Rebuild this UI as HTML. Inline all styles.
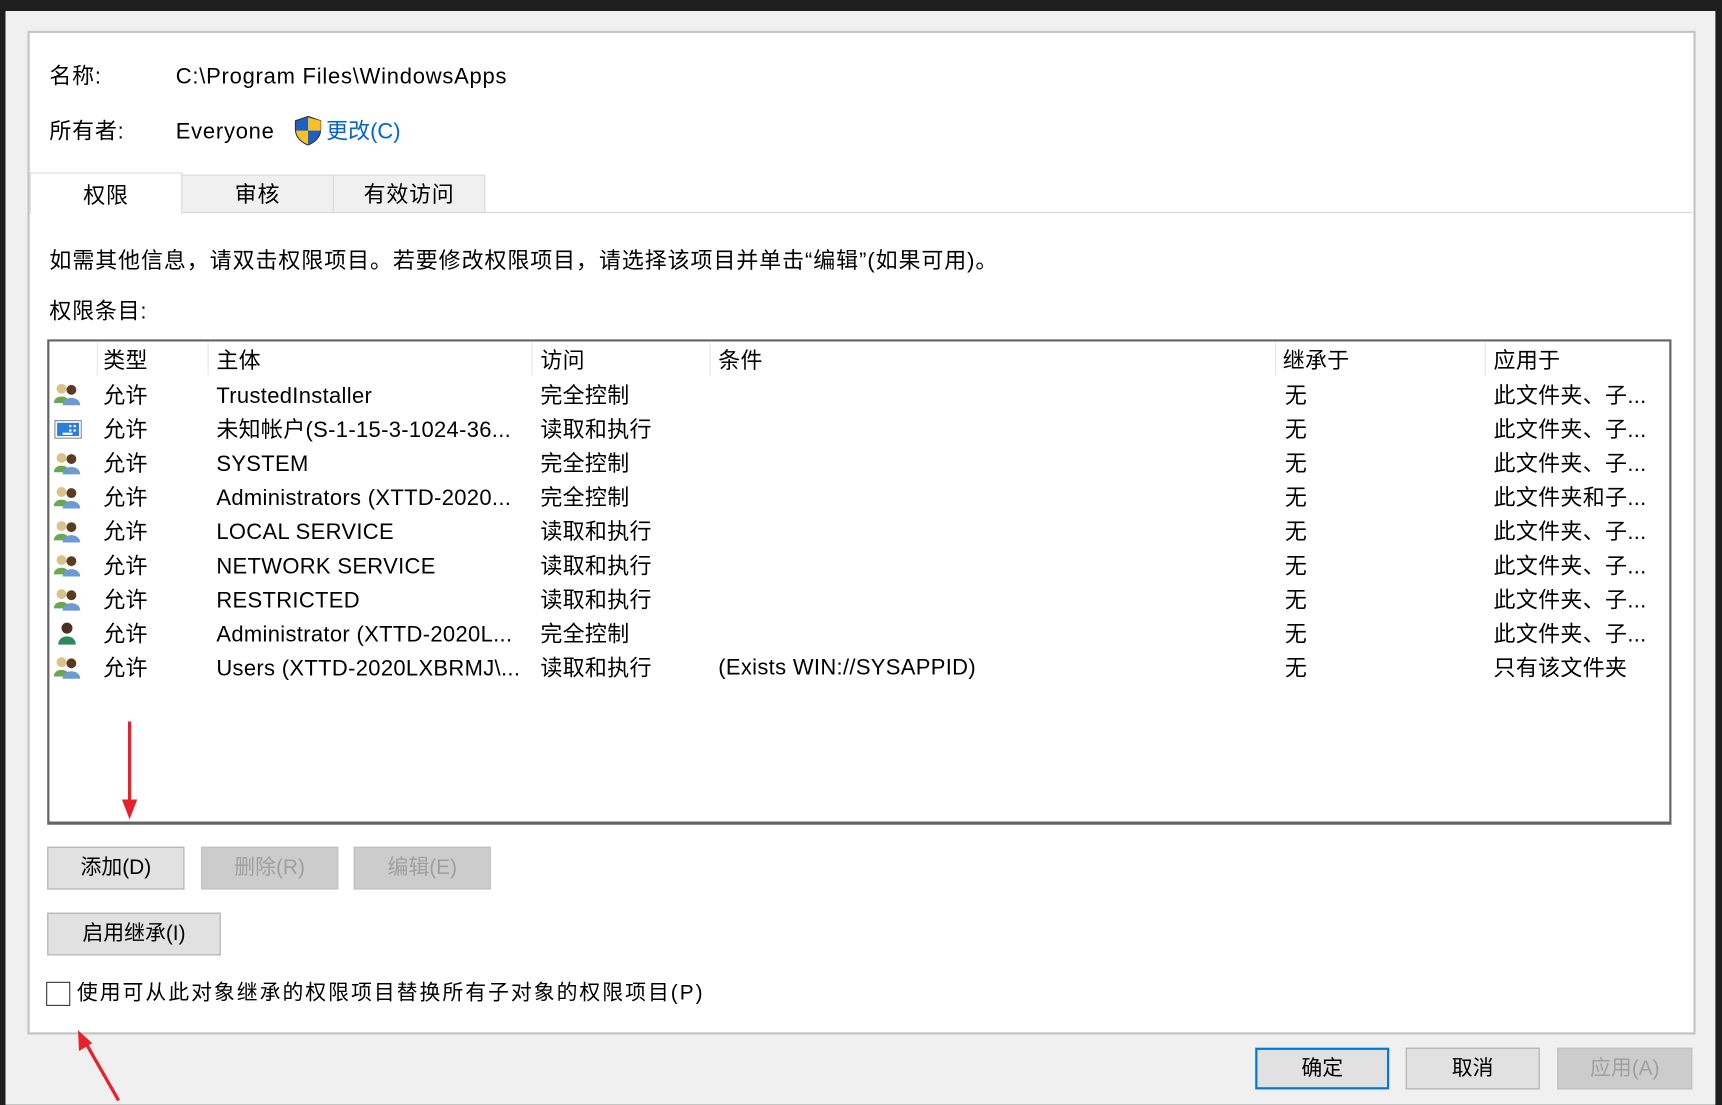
<!DOCTYPE html>
<html><head><meta charset="utf-8"><style>
html,body{margin:0;padding:0;width:1722px;height:1105px;overflow:hidden;background:#1e1e1e;}
#w{position:absolute;left:0;top:0;width:1568px;height:1006px;transform:scale(1.0982);transform-origin:0 0;font-family:"Liberation Sans","Noto Sans CJK SC",sans-serif;font-size:20px;color:#000;letter-spacing:0.7px;}
.a{position:absolute;white-space:nowrap;line-height:24px;}
.t{letter-spacing:0.3px;}
.btn{position:absolute;background:#e1e1e1;border:1px solid #adadad;box-sizing:border-box;text-align:center;font-size:19px;line-height:38px;letter-spacing:0;}
.dis{background:#cccccc;border-color:#bfbfbf;color:#a0a0a0;}
.tab{position:absolute;top:159px;height:35px;background:#f0f0f0;border:1px solid #d9d9d9;box-sizing:border-box;text-align:center;line-height:36px;}
</style></head><body><div id="w">
<div class="a" style="left:5px;top:10px;width:1557px;height:996px;background:#f0f0f0;"></div>
<div class="a" style="left:25px;top:28px;width:1515px;height:910px;background:#fff;border:2px solid #c4c4c4;"></div>
<div class="a" style="left:45px;top:58px;">名称:</div>
<div class="a" style="left:160px;top:58px;">C:\Program Files\WindowsApps</div>
<div class="a" style="left:45px;top:108px;">所有者:</div>
<div class="a" style="left:160px;top:108px;">Everyone</div>
<svg class="a" style="left:268px;top:105px" width="25" height="28" viewBox="0 0 25 28"><path d="M12.5 1 L24 5 V13 C24 20 18 25 12.5 27 C7 25 1 20 1 13 V5 Z" fill="#1f5fbf" stroke="#333" stroke-width="1"/><path d="M12.5 2 V14 H24 V5 Z" fill="#f5c22b"/><path d="M12.5 14 H1.5 C2 20 7 24.5 12.5 26.5 Z" fill="#f5c22b"/></svg>
<div class="a" style="left:297px;top:108px;color:#0066cc;letter-spacing:0;">更改(C)</div>
<div class="a" style="left:441px;top:193px;width:1100px;height:1px;background:#d9d9d9;"></div>
<div class="tab" style="left:165px;width:139px;">审核</div>
<div class="tab" style="left:303px;width:139px;">有效访问</div>
<div class="tab" style="left:27px;top:157px;width:139px;height:38px;background:#fff;border-bottom:none;line-height:42px;">权限</div>
<div class="a" style="left:45px;top:226px;letter-spacing:0.85px;">如需其他信息，请双击权限项目。若要修改权限项目，请选择该项目并单击“编辑”(如果可用)。</div>
<div class="a" style="left:45px;top:272px;">权限条目:</div>
<div class="a" style="left:43px;top:309px;width:1475px;height:437px;border:2px solid #646464;border-bottom-width:3px;background:#fff;"></div>
<div class="a" style="left:88px;top:312px;width:1px;height:30px;background:#e5e5e5"></div>
<div class="a" style="left:189px;top:312px;width:1px;height:30px;background:#e5e5e5"></div>
<div class="a" style="left:484px;top:312px;width:1px;height:30px;background:#e5e5e5"></div>
<div class="a" style="left:646px;top:312px;width:1px;height:30px;background:#e5e5e5"></div>
<div class="a" style="left:1161px;top:312px;width:1px;height:30px;background:#e5e5e5"></div>
<div class="a" style="left:1352px;top:312px;width:1px;height:30px;background:#e5e5e5"></div>
<div class="a t" style="left:94px;top:317px;">类型</div><div class="a t" style="left:197px;top:317px;">主体</div><div class="a t" style="left:492px;top:317px;">访问</div><div class="a t" style="left:654px;top:317px;">条件</div><div class="a t" style="left:1168px;top:317px;">继承于</div><div class="a t" style="left:1360px;top:317px;">应用于</div>
<svg width="0" height="0" style="position:absolute"><defs>
<g id="grp"><circle cx="7" cy="6" r="4.5" fill="#d9c38a"/><path d="M0 19 C0 11 14 11 14 19 Z" fill="#6aa84f"/><circle cx="16" cy="7" r="4.5" fill="#5a3a22"/><path d="M8 21 C8 12 24 12 24 21 Z" fill="#6b9bd1"/></g>
<g id="one"><circle cx="11" cy="6" r="5" fill="#4a3020"/><path d="M3 21 C3 11 19 11 19 21 Z" fill="#2e8b57"/></g>
<g id="app"><rect x="1" y="3" width="24" height="16" fill="#fff" stroke="#8a8a8a"/><rect x="3" y="5" width="20" height="12" fill="#2b7fd9"/><rect x="14" y="7" width="2" height="2" fill="#fff"/><rect x="18" y="7" width="2" height="2" fill="#fff"/><rect x="14" y="11" width="2" height="2" fill="#fff"/><rect x="18" y="11" width="2" height="2" fill="#fff"/><rect x="8" y="14" width="9" height="2" fill="#fff"/></g>
</defs></svg>
<svg class="a" style="left:49px;top:348px" width="26" height="22"><use href="#grp"/></svg>
<svg class="a" style="left:49px;top:380px" width="26" height="22"><use href="#app"/></svg>
<svg class="a" style="left:49px;top:411px" width="26" height="22"><use href="#grp"/></svg>
<svg class="a" style="left:49px;top:442px" width="26" height="22"><use href="#grp"/></svg>
<svg class="a" style="left:49px;top:473px" width="26" height="22"><use href="#grp"/></svg>
<svg class="a" style="left:49px;top:504px" width="26" height="22"><use href="#grp"/></svg>
<svg class="a" style="left:49px;top:535px" width="26" height="22"><use href="#grp"/></svg>
<svg class="a" style="left:50px;top:566px" width="24" height="22"><use href="#one"/></svg>
<svg class="a" style="left:49px;top:597px" width="26" height="22"><use href="#grp"/></svg>
<div class="a t" style="left:94px;top:346px;line-height:31px;">允许<br>允许<br>允许<br>允许<br>允许<br>允许<br>允许<br>允许<br>允许</div>
<div class="a t" style="left:197px;top:346px;line-height:31px;">TrustedInstaller<br>未知帐户(S-1-15-3-1024-36...<br>SYSTEM<br>Administrators (XTTD-2020...<br>LOCAL SERVICE<br>NETWORK SERVICE<br>RESTRICTED<br>Administrator (XTTD-2020L...<br>Users (XTTD-2020LXBRMJ\...</div>
<div class="a t" style="left:492px;top:346px;line-height:31px;">完全控制<br>读取和执行<br>完全控制<br>完全控制<br>读取和执行<br>读取和执行<br>读取和执行<br>完全控制<br>读取和执行</div>
<div class="a t" style="left:654px;top:596px;">(Exists WIN://SYSAPPID)</div>
<div class="a t" style="left:1170px;top:346px;line-height:31px;">无<br>无<br>无<br>无<br>无<br>无<br>无<br>无<br>无</div>
<div class="a t" style="left:1360px;top:346px;line-height:31px;">此文件夹、子...<br>此文件夹、子...<br>此文件夹、子...<br>此文件夹和子...<br>此文件夹、子...<br>此文件夹、子...<br>此文件夹、子...<br>此文件夹、子...<br>只有该文件夹</div>
<svg class="a" style="left:0;top:0" width="1568" height="1006"><path d="M118 657 V738" stroke="#e8222a" stroke-width="3"/><path d="M111 728 L118 746 L125 728 Z" fill="#e8222a"/><path d="M108 1002 L76 946" stroke="#e8222a" stroke-width="3"/><path d="M71 938 L72 957 L84 950 Z" fill="#e8222a"/></svg>
<div class="btn" style="left:43px;top:771px;width:125px;height:39px;">添加(D)</div>
<div class="btn dis" style="left:183px;top:771px;width:125px;height:39px;">删除(R)</div>
<div class="btn dis" style="left:322px;top:771px;width:125px;height:39px;">编辑(E)</div>
<div class="btn" style="left:43px;top:831px;width:158px;height:39px;">启用继承(I)</div>
<div class="a" style="left:42px;top:894px;width:20px;height:20px;border:1px solid #333;background:#fff;"></div>
<div class="a" style="left:70px;top:893px;font-size:19px;letter-spacing:1.8px;">使用可从此对象继承的权限项目替换所有子对象的权限项目(P)</div>
<div class="btn" style="left:1143px;top:954px;width:122px;height:38px;border:2px solid #0078d7;line-height:36px;">确定</div>
<div class="btn" style="left:1280px;top:954px;width:122px;height:38px;">取消</div>
<div class="btn dis" style="left:1418px;top:954px;width:123px;height:38px;">应用(A)</div>
</div></body></html>
